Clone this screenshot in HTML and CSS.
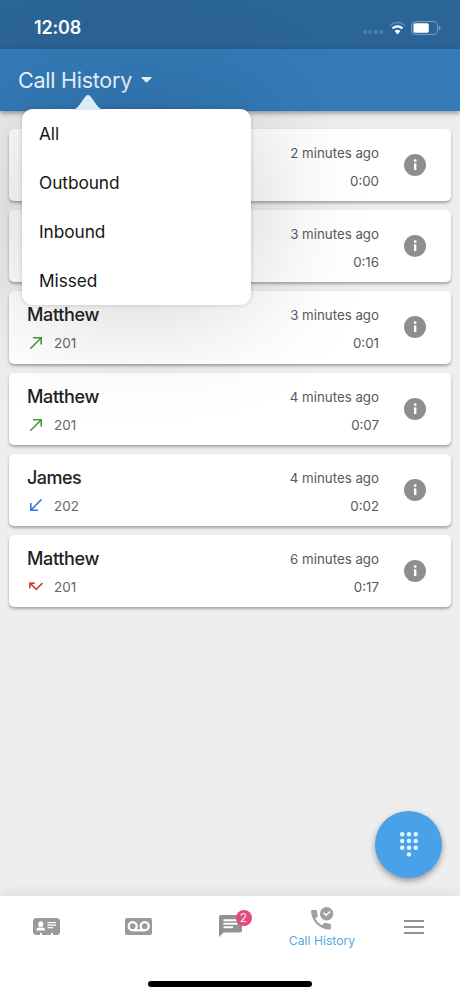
FILE: index.html
```html
<!DOCTYPE html>
<html lang="en">
<head>
<meta charset="utf-8">
<title>Call History</title>
<link rel="stylesheet" href="styles.css">
</head>
<body>
<svg class="defs" width="0" height="0" aria-hidden="true">
  <symbol id="info" viewBox="0 0 24 24"><circle cx="12" cy="12" r="12" fill="#8e8e8e"/><circle cx="12.200" cy="7.200" r="1.500" fill="#fff"/><path d="M10.900 10.200h2.600v7.300h-2.600z" fill="#fff"/></symbol>
  <symbol id="out" viewBox="0 0 14 14"><path d="M1.300 12.700L12 2M4 1.800h8.200V8.500" fill="none" stroke="#459c3b" stroke-width="1.600"/></symbol>
  <symbol id="in" viewBox="0 0 14 14"><path d="M12.500 .5L2 11M1.800 4v7.200H9" fill="none" stroke="#3d74d3" stroke-width="1.600"/></symbol>
  <symbol id="miss" viewBox="0 0 14 14"><path d="M.9 8.200V3.100h4.800M1 3.200l6.200 6.200 6.300-6.300" fill="none" stroke="#d0453c" stroke-width="1.700"/></symbol>
</svg>
<div class="phone">
  <div class="status">
    <span class="clock">12:08</span>
    <div class="signals">
      <span class="dots"><i></i><i></i><i></i><i></i></span>
      <svg class="wifi" width="17" height="14" viewBox="0 0 17 14" fill="none"><path d="M1 4.600Q8.500-1.800 16 4.600" stroke="#4b85b4" stroke-width="2"/><path d="M3.500 7.400Q8.500 3.200 13.500 7.400" stroke="#fff" stroke-width="2.200"/><path d="M5.600 10.100Q8.500 7.600 11.400 10.100L8.500 13.400z" fill="#fff"/></svg>
      <svg class="battery" width="30" height="14" viewBox="0 0 30 14"><rect x=".6" y=".6" width="26" height="12.800" rx="3.600" fill="none" stroke="#79a4c6"/><rect x="2.400" y="2.200" width="15.400" height="9.600" rx="1.600" fill="#fff"/><path d="M28 4.600q3.200 2.400 0 4.800z" fill="#79a4c6"/></svg>
    </div>
  </div>
  <header class="bar">
    <h1 class="title">Call History</h1>
    <svg class="caret" width="11" height="6" viewBox="0 0 11 6"><path d="M.6 0h9.800q.6.300.2.800L6.100 5.200q-.6.500-1.200 0L.4.800Q0 .3.600 0z" fill="#f4f9fc"/></svg>
  </header>
  <main class="list">
    <article class="card"><div class="who"></div><div class="when"><span>2 minutes ago</span><span>0:00</span></div><svg class="info"><use href="#info"/></svg></article>
    <article class="card"><div class="who"></div><div class="when"><span>3 minutes ago</span><span>0:16</span></div><svg class="info"><use href="#info"/></svg></article>
    <article class="card"><div class="who"><span class="name">Matthew</span><span class="ext"><svg class="dir"><use href="#out"/></svg>201</span></div><div class="when"><span>3 minutes ago</span><span>0:01</span></div><svg class="info"><use href="#info"/></svg></article>
    <article class="card"><div class="who"><span class="name">Matthew</span><span class="ext"><svg class="dir"><use href="#out"/></svg>201</span></div><div class="when"><span>4 minutes ago</span><span>0:07</span></div><svg class="info"><use href="#info"/></svg></article>
    <article class="card"><div class="who"><span class="name james">James</span><span class="ext"><svg class="dir"><use href="#in"/></svg>202</span></div><div class="when"><span>4 minutes ago</span><span>0:02</span></div><svg class="info"><use href="#info"/></svg></article>
    <article class="card"><div class="who"><span class="name">Matthew</span><span class="ext"><svg class="dir"><use href="#miss"/></svg>201</span></div><div class="when"><span>6 minutes ago</span><span>0:17</span></div><svg class="info"><use href="#info"/></svg></article>
  </main>
  <nav class="tabs">
    <div class="tab"><svg width="27" height="17" viewBox="0 0 27 17"><path d="M3.500 0h20Q27 0 27 3.500v10q0 3.500-3.500 3.500H20v-2h-2v2H9v-2H7v2H3.500Q0 17 0 13.500v-10Q0 0 3.500 0z" fill="#9a9a9a"/><ellipse cx="7.700" cy="6.200" rx="2.500" ry="3" fill="#fff"/><path d="M3.200 12.500q0-2.500 2.800-3.200l1.700 1 1.700-1q2.800.700 2.800 3.200z" fill="#fff"/><path d="M14.500 4.700H23M14.500 7.200H23M14.500 9.700h5.500" stroke="#fff" stroke-width="1.300"/></svg></div>
    <div class="tab"><svg width="27" height="17" viewBox="0 0 27 17"><rect width="27" height="17" rx="2" fill="#9a9a9a"/><g fill="none" stroke="#fff" stroke-width="2.300"><circle cx="7.700" cy="8.200" r="4"/><circle cx="19.700" cy="8.200" r="4"/><path d="M7.700 12.300h12"/></g></svg></div>
    <div class="tab"><div class="chat"><svg width="23" height="23" viewBox="0 0 23 23"><path d="M2 0h19q2 0 2 2v13.500q0 2-2 2H4.500L0 22V2Q0 0 2 0z" fill="#929292"/><path d="M4.500 5.200h14M4.500 8.700h14M4.500 12.300h9.500" stroke="#fff" stroke-width="1.900"/></svg><span class="badge">2</span></div></div>
    <div class="tab active"><svg width="24" height="24" viewBox="0 0 24 24"><path d="M2.200 3h3.800q.9 0 1 1 .1 2.200.8 4.200.2.700-.3 1.200L5.300 11.800q2.700 4.700 6.700 6.500l2.200-2.200q.5-.5 1.200-.3 2 .7 4.400.9 1.200.1 1.200 1.200v3.600q0 1.100-1.200 1.100C9.500 22.500 1.200 14 1.100 4q0-1 1.100-1z" fill="#a0a0a0"/><circle cx="16.600" cy="6.700" r="6.700" fill="#a0a0a0"/><path d="M13.600 5.800l2.500 2.500 4-3.800" fill="none" stroke="#fff" stroke-width="1.500"/></svg><span class="label">Call History</span></div>
    <div class="tab"><svg width="20" height="14" viewBox="0 0 20 14"><path d="M0 1h20M0 7h20M0 13h20" stroke="#929292" stroke-width="2"/></svg></div>
  </nav>
  <div class="home"></div>

  <button class="fab" aria-label="Dial pad"><svg width="18" height="25" viewBox="0 0 18 25" fill="#e2f7ff"><circle cx="2.200" cy="2.200" r="2.200"/><circle cx="9" cy="2.200" r="2.200"/><circle cx="15.800" cy="2.200" r="2.200"/><circle cx="2.200" cy="9" r="2.200"/><circle cx="9" cy="9" r="2.200"/><circle cx="15.800" cy="9" r="2.200"/><circle cx="2.200" cy="15.700" r="2.200"/><circle cx="9" cy="15.700" r="2.200"/><circle cx="15.800" cy="15.700" r="2.200"/><circle cx="9" cy="22.400" r="2.200"/></svg></button>

  <div class="menu">
    <svg class="pointer" width="34" height="15" viewBox="0 0 34 15"><path d="M0 15q5-.3 8-4.500l6-8.500q3-3.800 6 0l6 8.500q3 4.200 8 4.500z" fill="#dcebf4"/></svg>
    <div class="item">All</div><div class="item">Outbound</div><div class="item">Inbound</div><div class="item">Missed</div>
  </div>
</div>
</body>
</html>
```
FILE: styles.css
```css
* { box-sizing: border-box; }
body { margin: 0; font-family: Inter, Roboto, sans-serif; color: #111; }
.defs { position: absolute; }
.phone { position: relative; width: 460px; height: 996px; display: flex; flex-direction: column; background: #eee; overflow: hidden; }
.status { flex: none; height: 49px; display: flex; justify-content: space-between; padding: 16px 19px 0 34px; background: #2b6496; color: #fff; }
.clock { font-size: 18px; line-height: 24px; font-weight: 600; letter-spacing: -.15px; }
.signals { display: flex; align-items: flex-start; padding-top: 5px; }
.dots { display: flex; gap: 1.500px; padding-top: 9px; margin-right: 6px; }
.dots i { width: 4px; height: 4px; border-radius: 50%; background: #477fae; }
.wifi { margin-right: 5px; }
.bar { flex: none; height: 62px; display: flex; align-items: center; padding: 0 0 0 18px; background: #347bb8; box-shadow: 0 2px 5px rgba(0,0,0,.4); }
.title { margin: 0; font-size: 21.500px; line-height: 28px; font-weight: 400; letter-spacing: -.25px; color: #eef8ff; }
.caret { margin-left: 9px; }
.list { flex: 1; display: flex; flex-direction: column; gap: 9px; padding: 18px 9px 0; }
.card { flex: none; height: 72.200px; display: flex; align-items: center; padding: 0 25px 0 18px; background: #fff; border-radius: 5px; box-shadow: 0 2px 3px rgba(0,0,0,.31); }
.who, .when { display: flex; flex-direction: column; height: 52px; justify-content: space-between; }
.who { flex: 1; align-items: flex-start; }
.name { font-size: 18px; line-height: 27.500px; font-weight: 500; letter-spacing: -.35px; color: #222; }
.name.james { letter-spacing: -.55px; }
.ext { display: flex; align-items: center; font-size: 13.500px; line-height: 20px; color: #666; }
.dir { width: 14px; height: 14px; margin: 0 11px 0 2px; }
.when { align-items: flex-end; font-size: 13.300px; line-height: 24px; color: #595959; transform: translateY(2px); }
.info { width: 22px; height: 22px; margin-left: 25px; }
.tabs { flex: none; height: 100px; display: grid; grid-template-columns: repeat(5, 92px); background: #fff; box-shadow: 0 -2px 12px rgba(0,0,0,.08); }
.tab { height: 61px; display: flex; flex-direction: column; align-items: center; justify-content: center; }
.tab.active { padding-top: 2px; gap: 1px; }
.label { font-size: 12.200px; line-height: 17px; color: #54aade; white-space: nowrap; }
.chat { position: relative; height: 23px; }
.chat svg { display: block; }
.badge { position: absolute; left: 17px; top: -5px; width: 16px; height: 16px; border-radius: 50%; background: #e4487f; color: #ffe7f1; font-size: 12px; line-height: 16px; text-align: center; }
.home { position: absolute; left: 148px; top: 981px; width: 164px; height: 6px; border-radius: 3px; background: #000; }
.fab { position: absolute; left: 375px; top: 811px; width: 67px; height: 67px; padding: 0; border: 0; border-radius: 50%; background: #49a2e9; display: flex; align-items: center; justify-content: center; box-shadow: 0 3px 6px rgba(0,0,0,.36); }
.menu { position: absolute; left: 21.500px; top: 109px; width: 229.500px; height: 195.500px; border-radius: 11px; background: #fff; box-shadow: 0 0 120px rgba(0,0,0,.2), 0 0 4px rgba(0,0,0,.18); }
.pointer { position: absolute; left: 49.500px; top: -14.500px; }
.item { height: 49px; padding-left: 17.500px; font-size: 17.300px; line-height: 49px; letter-spacing: -.07px; color: #151515; }
```
